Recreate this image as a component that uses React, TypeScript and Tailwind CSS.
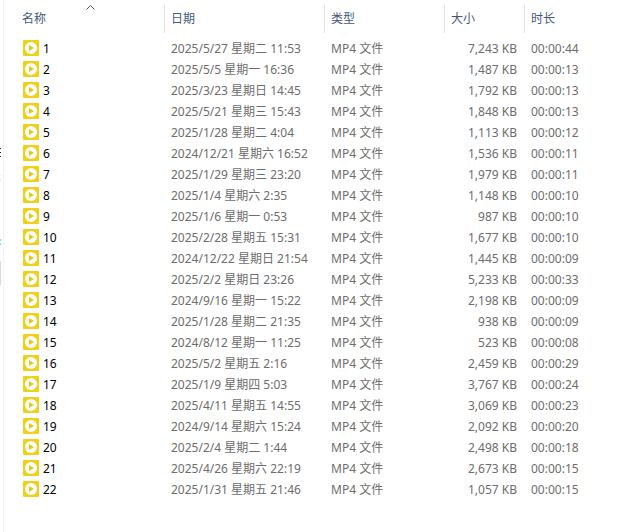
type Clip = {
  name: string;
  date: string;
  size: string;
  duration: string;
};

const clips: Clip[] = [
  { name: "1", date: "2025/5/27 星期二 11:53", size: "7,243 KB", duration: "00:00:44" },
  { name: "2", date: "2025/5/5 星期一 16:36", size: "1,487 KB", duration: "00:00:13" },
  { name: "3", date: "2025/3/23 星期日 14:45", size: "1,792 KB", duration: "00:00:13" },
  { name: "4", date: "2025/5/21 星期三 15:43", size: "1,848 KB", duration: "00:00:13" },
  { name: "5", date: "2025/1/28 星期二 4:04", size: "1,113 KB", duration: "00:00:12" },
  { name: "6", date: "2024/12/21 星期六 16:52", size: "1,536 KB", duration: "00:00:11" },
  { name: "7", date: "2025/1/29 星期三 23:20", size: "1,979 KB", duration: "00:00:11" },
  { name: "8", date: "2025/1/4 星期六 2:35", size: "1,148 KB", duration: "00:00:10" },
  { name: "9", date: "2025/1/6 星期一 0:53", size: "987 KB", duration: "00:00:10" },
  { name: "10", date: "2025/2/28 星期五 15:31", size: "1,677 KB", duration: "00:00:10" },
  { name: "11", date: "2024/12/22 星期日 21:54", size: "1,445 KB", duration: "00:00:09" },
  { name: "12", date: "2025/2/2 星期日 23:26", size: "5,233 KB", duration: "00:00:33" },
  { name: "13", date: "2024/9/16 星期一 15:22", size: "2,198 KB", duration: "00:00:09" },
  { name: "14", date: "2025/1/28 星期二 21:35", size: "938 KB", duration: "00:00:09" },
  { name: "15", date: "2024/8/12 星期一 11:25", size: "523 KB", duration: "00:00:08" },
  { name: "16", date: "2025/5/2 星期五 2:16", size: "2,459 KB", duration: "00:00:29" },
  { name: "17", date: "2025/1/9 星期四 5:03", size: "3,767 KB", duration: "00:00:24" },
  { name: "18", date: "2025/4/11 星期五 14:55", size: "3,069 KB", duration: "00:00:23" },
  { name: "19", date: "2024/9/14 星期六 15:24", size: "2,092 KB", duration: "00:00:20" },
  { name: "20", date: "2025/2/4 星期二 1:44", size: "2,498 KB", duration: "00:00:18" },
  { name: "21", date: "2025/4/26 星期六 22:19", size: "2,673 KB", duration: "00:00:15" },
  { name: "22", date: "2025/1/31 星期五 21:46", size: "1,057 KB", duration: "00:00:15" },
];

function VideoIcon() {
  return (
    <svg className="mt-0.5 size-4 shrink-0" viewBox="0 0 16 16" aria-hidden="true">
      <rect width="16" height="16" rx="1" fill="#f0d018" />
      <circle cx="8" cy="8" r="6" fill="#fff" />
      <path d="M6 5v6l5-3z" fill="#ecc80c" />
    </svg>
  );
}

// Sliver of the folder tree that shows left of the file list
function TreeEdge() {
  return (
    <div className="w-[3px] shrink-0" aria-hidden="true">
      <svg className="block h-[300px] w-full" viewBox="0 0 3 300">
        <path d="M0 148h1v1H0zM0 152h1v1H0zM0 156h1v1H0z" fill="#222" />
        <path d="M0 175h1v1H0zM0 179h1v2H0z" fill="#fdf09a" />
        <path d="M0 239h1v2H0zM0 243h1v2H0z" fill="#7fd3f5" />
        <path d="M0 261h1v24H0z" fill="#d9d9e0" />
      </svg>
    </div>
  );
}

type HeaderCellProps = {
  label: string;
  sorted?: boolean;
};

function HeaderCell({ label, sorted }: HeaderCellProps) {
  return (
    <th
      className="group p-0 font-normal"
      scope="col"
      aria-sort={sorted ? "ascending" : undefined}
    >
      <button
        type="button"
        className={`relative block h-7 w-full border-r border-[#e0e3ea] text-left text-[#44597a] group-last:border-r-0 ${
          sorted ? "pl-[18px]" : "pl-1.5"
        }`}
      >
        {label}
        {sorted && (
          <svg className="absolute top-0 right-[69px] h-[5px] w-[9px]" viewBox="0 0 9 5" aria-hidden="true">
            <path d="M.5 4.5l4-4 4 4" fill="none" stroke="#555" />
          </svg>
        )}
      </button>
    </th>
  );
}

export default function App() {
  return (
    <main className="flex min-h-screen overflow-hidden bg-white font-['Noto_Sans','Noto_Sans_CJK_SC',sans-serif] text-xs text-[#6d6d6d]">
      <TreeEdge />
      <div className="flex-1 border-l border-[#f3f3f3] pt-[5px]">
        <table className="w-full table-fixed border-collapse">
          <colgroup>
            <col className="w-[161px]" />
            <col className="w-40" />
            <col className="w-[120px]" />
            <col className="w-20" />
            <col />
          </colgroup>
          <thead>
            <tr>
              <HeaderCell label="名称" sorted />
              <HeaderCell label="日期" />
              <HeaderCell label="类型" />
              <HeaderCell label="大小" />
              <HeaderCell label="时长" />
            </tr>
            <tr className="h-[5px]" />
          </thead>
          <tbody className="leading-[21px] whitespace-nowrap">
            {clips.map((clip) => (
              <tr key={clip.name}>
                <td className="p-0 pl-[19px] text-black">
                  <div className="flex items-start gap-1">
                    <VideoIcon />
                    {clip.name}
                  </div>
                </td>
                <td className="p-0 pl-1.5">{clip.date}</td>
                <td className="p-0 pl-1.5">MP4 文件</td>
                <td className="p-0 pr-2 text-right">{clip.size}</td>
                <td className="p-0 pl-1.5">{clip.duration}</td>
              </tr>
            ))}
          </tbody>
        </table>
      </div>
    </main>
  );
}
